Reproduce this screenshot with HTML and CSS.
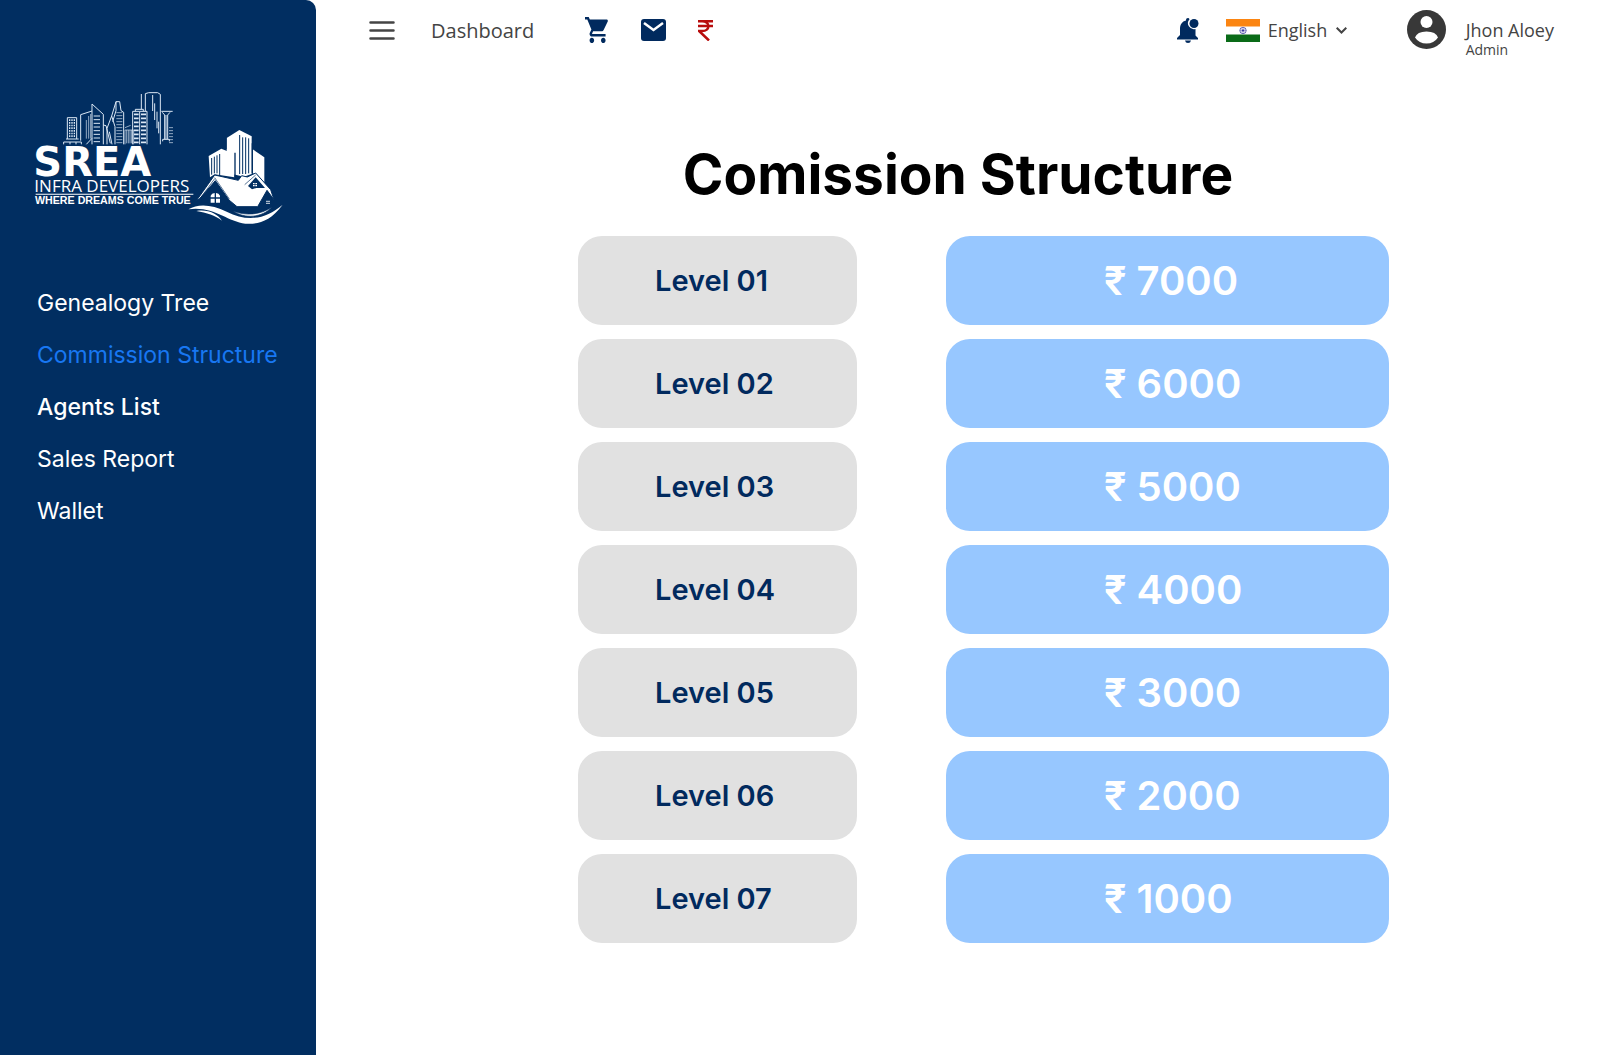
FILE: index.html
```html
<!DOCTYPE html>
<html lang="en">
<head>
  <meta charset="UTF-8">
  <title>Commission Structure - SREA Infra Developers</title>
  <meta name="viewport" content="width=device-width, initial-scale=1.0">
  <link rel="stylesheet" href="styles.css">
</head>
<body>
  <div class="layout">
    <aside class="sidebar">
      <a href="#home" class="logo" aria-label="SREA Infra Developers">
        <svg viewBox="0 0 840 480" fill="#fff">
          <!-- skyline -->
          <g fill="none" stroke="#dce8f5" stroke-width="3">
            <path d="M142 177V113H170V177M131 193V186H184V193M138 177H176M150 186V193M168 186V193"/>
            <path d="M149 118V172M156 118V172M163 118V172" stroke-width="4" stroke-dasharray="5 3"/>
            <path d="M182 182V104L216 93M216 193V72L250 103V193M199 193L216 175"/>
            <path d="M199 120V176M206 108V176M212 102V176" stroke-width="2"/>
            <path d="M221 108H240M221 119H240M221 130H240M221 141H240M221 152H240M221 163H240M221 174H240M221 185H240"/>
            <path d="M250 135L258 137L271 190M261 193V145L275 108L288 65H299L303 92L311 97V193M275 108L285 140V193M268 155L276 193M288 65V92L278 125"/>
            <path d="M289 98H307M289 107H307M289 116H307M289 125H307M289 134H307M289 143H307M289 152H307M289 161H307M289 170H307M289 179H307M289 188H307" stroke-width="2"/>
            <path d="M315 193V150H341V193M315 143L332 136M320 150V190M325 150V190M330 150V190M335 150V190" stroke-width="2"/>
            <path d="M338 193V94H381V193M346 94V88H370V94M364 88V42M359 96V193"/>
            <path d="M342 103H356M342 115H356M342 127H356M342 139H356M342 151H356M342 163H356M342 175H356M342 187H356M363 103H378M363 115H378M363 127H378M363 139H378M363 151H378M363 163H378M363 175H378M363 187H378" stroke-width="5"/>
            <path d="M376 94V41L386 38H413L421 43V193M398 45V93M404 70V120M411 95V145M416 125V160"/>
            <path d="M424 94H458M427 97L434 105V177M450 97L443 105V177M428 184V178H448V184M438 105V177"/>
            <path d="M447 143H459M447 152H459M447 161H459M447 170H459M447 179H459M447 188H459" stroke-width="2"/>
          </g>
          <text x="40" y="288" class="logo-name">SREA</text>
          <text x="43" y="335" class="logo-line">INFRA DEVELOPERS</text>
          <path d="M47 341H520V344H47Z"/>
          <text x="45" y="373" class="logo-tag">WHERE DREAMS COME TRUE</text>
          <!-- towers -->
          <path d="M620 174L658 150L695 169V282L672 290L620 278Z"/>
          <path d="M566 228L604 206L643 222V292L584 283L570 292Z"/>
          <path d="M698 208L733 232V308L712 284L698 280Z"/>
          <g stroke="#012e61" fill="none">
            <path d="M645 218V292M618 208V174" stroke-width="4"/>
            <path d="M659 165V282M668 172V282M677 172V282M686 175V280" stroke-width="3"/>
            <path d="M575 234V284M583 230V280M591 226V280M599 222V285" stroke-width="3"/>
            <path d="M697 190V280" stroke-width="4"/>
          </g>
          <!-- houses -->
          <path d="M530 361L584 285L655 301L665 287L682 291L707 279L752 329L762 359L741 331L713 380H651L627 360L586 302L538 357Z" stroke="#012e61" stroke-width="3"/>
          <path d="M586 303L544 357V366Q577 369 604 386L622 372V354Z" fill="#012e61"/>
          <path d="M684 318L707 292L735 324L709 324L696 328Z" fill="#012e61"/>
          <path d="M741 334L722 371L748 374L757 358Z" fill="#012e61"/>
          <path d="M584 296L540 356M707 285L674 314M584 293L628 357" fill="none" stroke="#012e61" stroke-width="2"/>
          <path d="M572 352V347Q575 339 584 339V352ZM588 339Q597 339 600 347V352H588ZM572 356H584V368H572ZM588 356H600V368H588ZM699 309H704V313H699ZM706 309H711V313H706ZM699 315H704V319H699ZM706 315H711V319H706ZM739 362H743V366H739ZM745 362H749V366H745ZM739 368H743V372H739ZM745 368H749V372H745Z"/>
          <!-- waves -->
          <path d="M505 388C535 370 575 373 620 395C680 425 735 420 788 374C750 425 712 434 676 431C622 425 580 377 505 388Z"/>
          <path d="M529 393C565 388 590 400 606 422C586 406 560 399 529 393Z"/>
          <path d="M638 393C678 408 720 405 757 381C724 414 676 417 638 393Z" stroke="#012e61" stroke-width="2"/>
        </svg>
      </a>
      <nav>
        <ul class="menu">
          <li><a href="#genealogy">Genealogy Tree</a></li>
          <li><a href="#commission" class="active">Commission Structure</a></li>
          <li><a href="#agents" class="strong">Agents List</a></li>
          <li><a href="#sales">Sales Report</a></li>
          <li><a href="#wallet">Wallet</a></li>
        </ul>
      </nav>
    </aside>

    <div class="page">
      <header class="topbar">
        <button class="icon-btn menu-btn" aria-label="Toggle menu">
          <svg width="26" height="19" viewBox="0 0 26 19" stroke="#444" stroke-width="2.500" stroke-linecap="round"><path d="M1.500 1.500H24.500M1.500 9.500H24.500M1.500 17.500H24.500"/></svg>
        </button>
        <a href="#dashboard" class="dashboard">Dashboard</a>
        <div class="shortcuts">
          <button class="icon-btn" aria-label="Cart">
            <svg width="24" height="26" viewBox="1 2 21 20" preserveAspectRatio="none" fill="#012a5e"><path d="M7 18c-1.1 0-1.99.9-1.99 2S5.900 22 7 22s2-.9 2-2-.9-2-2-2zM1 2v2h2l3.600 7.590-1.350 2.450c-.16.28-.25.61-.25.96 0 1.100.9 2 2 2h12v-2H7.420c-.14 0-.25-.11-.25-.25l.03-.12.9-1.630h7.450c.75 0 1.410-.41 1.750-1.030l3.580-6.490c.08-.14.12-.31.12-.48 0-.55-.45-1-1-1H5.210l-.94-2H1zm16 16c-1.100 0-1.990.9-1.990 2s.89 2 1.990 2 2-.9 2-2-.9-2-2-2z"/></svg>
          </button>
          <button class="icon-btn" aria-label="Messages">
            <svg width="25" height="22" viewBox="0 0 25 22"><rect width="25" height="22" rx="3" fill="#012a5e"/><path d="M3 4L12.500 11L22 4" fill="none" stroke="#fff" stroke-width="2.500"/></svg>
          </button>
          <button class="icon-btn" aria-label="Payments">
            <svg width="15" height="21" viewBox="0 0 15 21" fill="none" stroke="#b80d0d" stroke-width="2.500"><path d="M0 1.300H15M0 6H15M1 1.300H4C12.500 1.300 12.500 11 4 11H1L11 20.500"/></svg>
          </button>
        </div>
        <button class="icon-btn bell" aria-label="Notifications">
          <svg width="22" height="25" viewBox="0 0 22 25" fill="#012a5e"><path d="M11 0C9.800 0 9 .8 9 2V2.500C5 3.500 3 6.500 3 10.500V17L0 20V21.500H21V20L18.500 17.500V11A6 6 0 0 1 12.500 1.200Q12 0 11 0ZM8 22.500H14Q13.500 25 11 25T8 22.500Z"/><circle cx="17" cy="5.500" r="4.500"/></svg>
        </button>
        <div class="language">
          <svg class="flag" width="34" height="23" viewBox="0 0 34 23"><path fill="#fff" d="M0 0H34V23H0Z"/><path fill="#fb8512" d="M0 0H34V7.500H0Z"/><path fill="#0a6b18" d="M0 15.500H34V23H0Z"/><g fill="none" stroke="#4a4aa8"><circle cx="17" cy="11.500" r="3.200" stroke-width=".8"/><path d="M17 8.300V14.700M13.800 11.500H20.200M14.700 9.200L19.300 13.800M19.300 9.200L14.700 13.800" stroke-width=".5"/></g><circle cx="17" cy="11.500" r="1" fill="#33339a"/></svg>
          <select aria-label="Language">
            <option>English</option>
          </select>
          <svg width="11" height="7" viewBox="0 0 11 7" fill="none" stroke="#444" stroke-width="2"><path d="M.7 .8L5.500 5.500L10.300 .8"/></svg>
        </div>
        <a href="#profile" class="profile">
          <svg width="39" height="39" viewBox="0 0 39 39"><circle cx="19.500" cy="19.500" r="19.500" fill="#383838"/><circle cx="19.500" cy="12" r="6" fill="#fff"/><path d="M8 27.500Q10 21.500 19.500 21.500T31 27.500Q27 33.500 19.500 33.500T8 27.500Z" fill="#fff"/></svg>
          <span class="profile-text">
            <span class="profile-name">Jhon Aloey</span>
            <span class="profile-role">Admin</span>
          </span>
        </a>
      </header>

      <main class="content">
        <h1>Comission Structure</h1>
        <table class="levels">
          <tbody>
            <tr><th scope="row">Level 01</th><td>₹ 7000</td></tr>
            <tr><th scope="row">Level 02</th><td>₹ 6000</td></tr>
            <tr><th scope="row">Level 03</th><td>₹ 5000</td></tr>
            <tr><th scope="row">Level 04</th><td>₹ 4000</td></tr>
            <tr><th scope="row">Level 05</th><td>₹ 3000</td></tr>
            <tr><th scope="row">Level 06</th><td>₹ 2000</td></tr>
            <tr><th scope="row">Level 07</th><td>₹ 1000</td></tr>
          </tbody>
        </table>
      </main>
    </div>
  </div>
</body>
</html>
```
FILE: styles.css
```css
* {
  box-sizing: border-box;
  margin: 0;
  padding: 0;
}

body {
  font-family: Inter, "Open Sans", sans-serif;
  background: #fff;
}

a {
  color: inherit;
  text-decoration: none;
}

.layout {
  display: flex;
  min-height: 100vh;
}

/* sidebar */
.sidebar {
  width: 316px;
  flex-shrink: 0;
  background: #012e61;
  color: #fff;
  border-top-right-radius: 10px;
  padding: 80px 20px 0;
}

.logo svg {
  display: block;
  width: 280px;
  height: 160px;
}

.logo-name {
  font: bold 120px "DejaVu Sans", sans-serif;
}

.logo-line {
  font: 500 51px "Open Sans", sans-serif;
}

.logo-tag {
  font: bold 32px "Liberation Sans", sans-serif;
}

.menu {
  list-style: none;
  display: flex;
  flex-direction: column;
  gap: 24px;
  padding: 49px 0 0 17px;
}

.menu a {
  display: block;
  font-size: 23px;
  line-height: 28px;
  white-space: nowrap;
}

.menu .active {
  color: #1877f2;
}

.menu .strong {
  font-weight: 500;
}

/* top bar */
.page {
  flex: 1;
}

.topbar {
  display: flex;
  align-items: center;
  height: 60px;
  padding: 0 46px 0 53px;
  font-family: "Open Sans", sans-serif;
  color: #444;
}

.icon-btn {
  background: none;
  border: none;
  cursor: pointer;
}

.icon-btn svg,
.profile svg {
  display: block;
}

.menu-btn {
  margin-right: 36px;
}

.dashboard {
  font-size: 20px;
}

.shortcuts {
  display: flex;
  align-items: center;
  gap: 32px;
  margin-left: 51px;
}

.bell {
  margin-left: auto;
}

.language {
  display: flex;
  align-items: center;
  margin: 0 60px 0 27px;
}

.language select {
  appearance: none;
  background: none;
  border: none;
  color: inherit;
  font: 18px "Open Sans", sans-serif;
  margin: 0 8px;
}

.profile {
  display: flex;
  align-items: flex-start;
  gap: 20px;
  margin-top: 7px;
}

.profile-text {
  display: flex;
  flex-direction: column;
  padding-top: 8px;
}

.profile-name {
  font-size: 18px;
  line-height: 24px;
}

.profile-role {
  font-size: 14px;
  line-height: 16px;
}

/* commission table */
.content {
  padding: 80px 0 40px;
}

.content h1 {
  font-size: 55px;
  line-height: 68px;
  text-align: center;
}

.levels {
  display: block;
  margin: 28px 211px 0 262px;
}

.levels tbody {
  display: flex;
  flex-direction: column;
  gap: 14px;
}

.levels tr {
  display: grid;
  grid-template-columns: 279fr 443fr;
  gap: 89px;
}

.levels th,
.levels td {
  border-radius: 24px;
  line-height: 89px;
  text-align: left;
}

.levels th {
  background: #e1e1e1;
  color: #012a5e;
  font-size: 29px;
  font-weight: 600;
  padding-left: 77px;
}

.levels td {
  background: #97c7ff;
  color: #fff;
  font-size: 40px;
  font-weight: 600;
  padding-left: 158px;
}
```
